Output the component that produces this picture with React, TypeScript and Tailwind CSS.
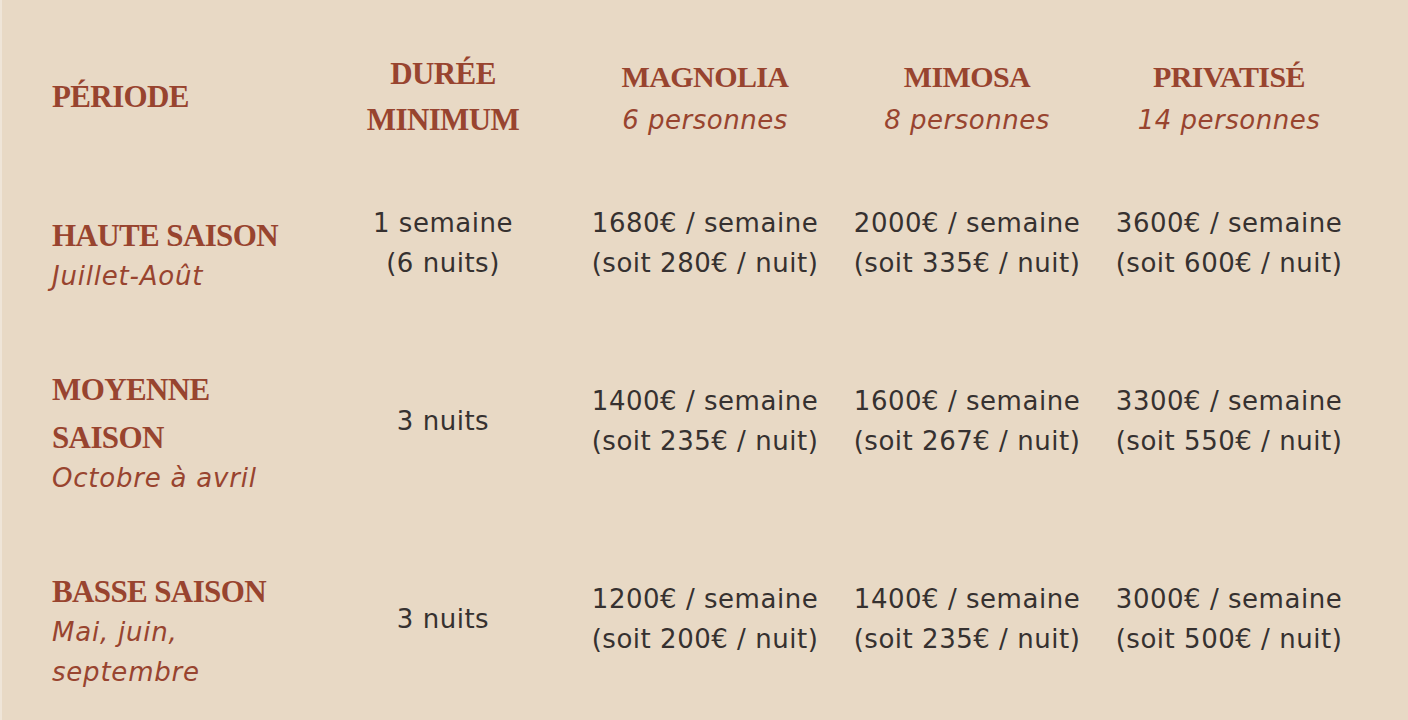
const serif = "font-['Liberation_Serif','Times_New_Roman',serif] tracking-[-0.02em]"
const sans = "font-['DejaVu_Sans','Open_Sans',sans-serif]"

type Season = {
  name: string
  months: string
  duration: string[]
  prices: [string, string][]
}

const seasons: Season[] = [
  {
    name: "HAUTE SAISON",
    months: "Juillet-Août",
    duration: ["1 semaine", "(6 nuits)"],
    prices: [
      ["1680€ / semaine", "(soit 280€ / nuit)"],
      ["2000€ / semaine", "(soit 335€ / nuit)"],
      ["3600€ / semaine", "(soit 600€ / nuit)"],
    ],
  },
  {
    name: "MOYENNE SAISON",
    months: "Octobre à avril",
    duration: ["3 nuits"],
    prices: [
      ["1400€ / semaine", "(soit 235€ / nuit)"],
      ["1600€ / semaine", "(soit 267€ / nuit)"],
      ["3300€ / semaine", "(soit 550€ / nuit)"],
    ],
  },
  {
    name: "BASSE SAISON",
    months: "Mai, juin, septembre",
    duration: ["3 nuits"],
    prices: [
      ["1200€ / semaine", "(soit 200€ / nuit)"],
      ["1400€ / semaine", "(soit 235€ / nuit)"],
      ["3000€ / semaine", "(soit 500€ / nuit)"],
    ],
  },
]

const rooms = [
  { name: "MAGNOLIA", guests: "6 personnes" },
  { name: "MIMOSA", guests: "8 personnes" },
  { name: "PRIVATISÉ", guests: "14 personnes" },
]

const grid = "grid grid-cols-[262px_262px_262px_262px_262px] items-center"

export default function App() {
  return (
    <div className="min-h-[720px] w-[1408px] overflow-hidden bg-[#e8d9c5] border-l-2 border-[#efe5d8]">
      <div className="pl-[48px] pt-[28px]">
        {/* header */}
        <div className={`${grid} py-[23px]`}>
          <div className={`${serif} pl-[2px] text-[31px] font-bold leading-[46px] text-[#98442f]`}>PÉRIODE</div>
          <div className={`${serif} text-center text-[31px] font-bold leading-[46px] text-[#98442f]`}>
            DURÉE
            <br />
            MINIMUM
          </div>
          {rooms.map((r) => (
            <div key={r.name} className="text-center text-[#98442f]">
              <div className={`${serif} text-[30px] font-bold leading-[46px]`}>{r.name}</div>
              <div className={`${sans} text-[26px] italic leading-[40px] tracking-[0.02em]`}>{r.guests}</div>
            </div>
          ))}
        </div>

        {seasons.map((s) => (
          <div key={s.name} className={`${grid} py-[20px]`}>
            <div className="pl-[2px] pr-[14px] pt-[26px] text-[#98442f]">
              <div className={`${serif} text-[31px] font-bold leading-[48px]`}>{s.name}</div>
              <div className={`${sans} -mt-[4px] pb-[4px] text-[26px] italic leading-[40px] tracking-[0.03em]`}>
                {s.months}
              </div>
            </div>
            <div className={`${sans} text-center text-[26px] leading-[40px] tracking-[0.02em] text-[#363130]`}>
              {s.duration.map((d) => (
                <div key={d}>{d}</div>
              ))}
            </div>
            {s.prices.map(([week, night]) => (
              <div key={week} className={`${sans} text-center text-[26px] leading-[40px] tracking-[0.02em] text-[#363130]`}>
                <div className="whitespace-nowrap">{week}</div>
                <div className="whitespace-nowrap">{night}</div>
              </div>
            ))}
          </div>
        ))}
      </div>
    </div>
  )
}
